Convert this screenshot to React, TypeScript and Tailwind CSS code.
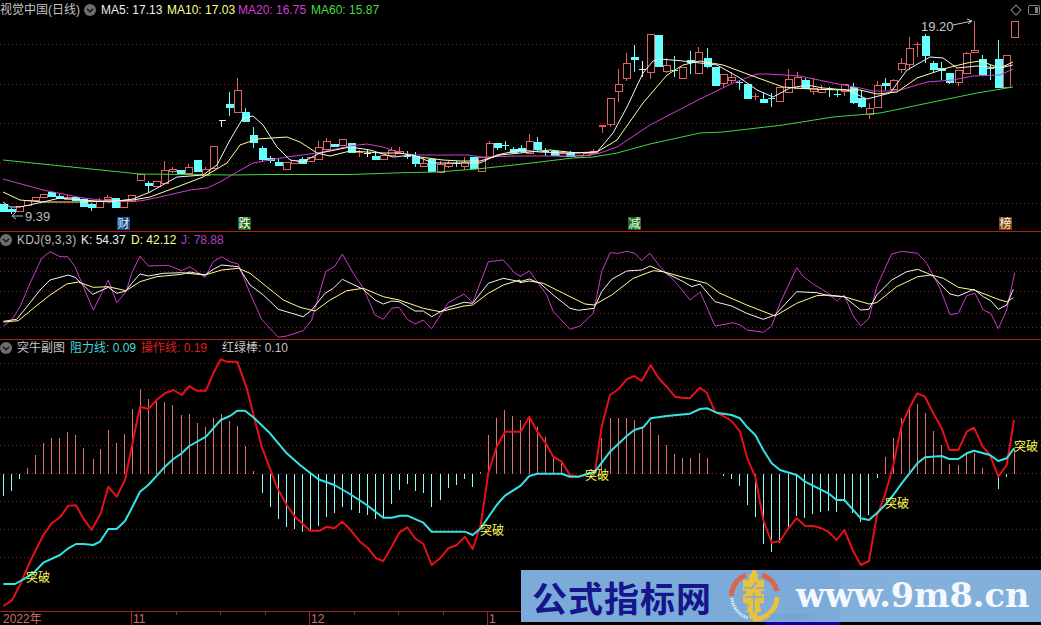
// 视觉中国 daily chart with the 突牛 sub-indicator. All series are in page pixels.
type Candle = [number, number, number, number, number, 'r' | 'c' | 'f' | 'w' | 'x'];

const candles: Candle[] = [
  [3, 204, 204, 211, 211, 'c'], [11, 208, 209, 211, 214, 'c'], [19, 206, 206, 211, 212, 'r'], [27, 200, 200, 205, 205, 'r'],
  [35, 197, 197, 200, 200, 'r'], [43, 194, 194, 197, 197, 'r'], [51, 192, 192, 196, 196, 'c'], [59, 194, 196, 198, 199, 'c'],
  [67, 195, 197, 199, 200, 'r'], [75, 197, 197, 200, 200, 'c'], [83, 198, 199, 206, 206, 'c'], [91, 203, 204, 207, 211, 'c'],
  [99, 198, 201, 207, 207, 'r'], [107, 195, 197, 199, 199, 'r'], [115, 198, 198, 207, 207, 'c'], [123, 201, 201, 207, 207, 'r'],
  [131, 195, 195, 201, 201, 'r'], [140, 174, 174, 180, 180, 'r'], [148, 181, 183, 185, 192, 'c'], [156, 181, 181, 186, 186, 'r'],
  [164, 161, 170, 183, 183, 'r'], [172, 167, 169, 171, 173, 'r'], [180, 170, 170, 173, 174, 'c'], [188, 164, 167, 173, 173, 'r'],
  [197, 160, 160, 171, 171, 'c'], [205, 167, 169, 175, 175, 'r'], [213, 146, 146, 168, 168, 'r'], [229, 92, 104, 107, 116, 'c'],
  [237, 78, 90, 112, 112, 'r'], [245, 108, 112, 121, 121, 'c'], [253, 127, 135, 142, 148, 'c'], [262, 146, 148, 159, 162, 'c'],
  [270, 156, 158, 160, 163, 'c'], [278, 159, 162, 165, 165, 'c'], [286, 162, 162, 169, 169, 'r'], [294, 160, 160, 163, 163, 'r'],
  [302, 157, 159, 163, 163, 'c'], [310, 157, 157, 161, 161, 'r'], [318, 141, 147, 159, 159, 'r'], [326, 138, 141, 149, 149, 'r'],
  [334, 144, 144, 146, 146, 'c'], [342, 139, 139, 145, 145, 'r'], [351, 143, 143, 152, 152, 'c'], [359, 150, 152, 153, 157, 'f'],
  [367, 149, 153, 153, 157, 'w'], [375, 152, 156, 159, 160, 'c'], [383, 155, 155, 159, 159, 'r'], [391, 147, 150, 155, 155, 'r'],
  [399, 147, 151, 153, 154, 'r'], [407, 151, 156, 156, 159, 'x'], [415, 152, 156, 163, 167, 'c'], [423, 157, 163, 166, 167, 'r'],
  [431, 159, 159, 171, 171, 'c'], [440, 161, 164, 172, 172, 'r'], [448, 161, 163, 166, 168, 'r'], [456, 161, 163, 163, 167, 'x'],
  [464, 157, 162, 166, 170, 'r'], [473, 157, 157, 168, 168, 'c'], [481, 157, 157, 171, 171, 'r'], [489, 141, 143, 157, 157, 'r'],
  [497, 143, 143, 147, 150, 'c'], [505, 141, 145, 145, 150, 'x'], [513, 147, 149, 152, 154, 'c'], [521, 145, 148, 151, 153, 'c'],
  [529, 134, 141, 153, 153, 'r'], [537, 137, 142, 149, 152, 'c'], [545, 148, 151, 151, 156, 'x'], [554, 151, 151, 155, 155, 'c'],
  [562, 151, 153, 156, 156, 'r'], [570, 151, 153, 156, 157, 'c'], [578, 155, 155, 157, 157, 'r'], [586, 153, 153, 155, 155, 'r'],
  [593, 149, 151, 153, 153, 'r'], [602, 125, 125, 127, 133, 'f'], [610, 98, 98, 124, 127, 'r'], [618, 69, 84, 91, 102, 'r'],
  [626, 53, 63, 78, 81, 'r'], [634, 45, 57, 59, 72, 'c'], [642, 61, 69, 69, 77, 'w'], [650, 34, 34, 72, 79, 'r'],
  [658, 35, 35, 66, 66, 'c'], [666, 58, 65, 71, 73, 'r'], [674, 56, 70, 70, 77, 'x'], [682, 67, 67, 78, 79, 'r'],
  [690, 51, 60, 62, 74, 'c'], [698, 47, 52, 73, 73, 'r'], [707, 48, 58, 66, 68, 'c'], [715, 67, 67, 85, 85, 'c'],
  [723, 74, 74, 83, 87, 'r'], [731, 72, 77, 80, 83, 'r'], [739, 80, 82, 82, 90, 'x'], [747, 84, 84, 98, 99, 'c'],
  [755, 93, 96, 97, 100, 'f'], [763, 93, 99, 102, 103, 'c'], [771, 93, 98, 98, 107, 'x'], [779, 87, 87, 101, 101, 'r'],
  [788, 69, 79, 92, 92, 'r'], [797, 72, 77, 88, 88, 'r'], [805, 78, 80, 88, 89, 'c'], [813, 78, 88, 91, 95, 'r'],
  [821, 85, 89, 92, 93, 'r'], [829, 87, 89, 89, 97, 'x'], [837, 90, 94, 94, 97, 'x'], [844, 84, 84, 91, 96, 'r'],
  [853, 83, 87, 102, 104, 'c'], [861, 90, 98, 106, 108, 'c'], [869, 103, 108, 114, 119, 'r'], [877, 81, 85, 107, 107, 'r'],
  [885, 78, 83, 85, 90, 'c'], [893, 79, 80, 89, 89, 'r'], [901, 58, 63, 69, 73, 'r'], [909, 37, 48, 64, 70, 'r'],
  [917, 42, 44, 45, 57, 'f'], [925, 34, 36, 55, 63, 'c'], [933, 61, 63, 69, 73, 'c'], [941, 62, 68, 70, 80, 'c'],
  [949, 73, 73, 82, 84, 'c'], [958, 70, 70, 82, 86, 'r'], [966, 52, 53, 73, 73, 'r'], [974, 21, 50, 52, 52, 'r'],
  [982, 55, 59, 74, 76, 'c'], [990, 65, 68, 68, 80, 'x'], [998, 40, 59, 87, 87, 'c'], [1006, 55, 55, 87, 88, 'r'],
  [1014, 21, 21, 37, 37, 'r'],
];

const ma60 = '3,160 140,174 233,175 267,174.5 350,174.5 403,172.7 437,172 477,169 523,164 573,158 593,157 617,153 650,144 700,133 723,132 783,125 833,117 880,113 933,102 977,93 1013,87';
const ma20 = '3,179 43,190 83,198 110,201 140,201 160,197 190,190 207,188 220,182 237,172 253,163 287,157 317,153 350,146 367,144 383,147 400,153 417,155 467,155 483,157 517,156 583,156 600,153 617,147 650,125 700,99 733,83 757,74 767,74 800,76 833,83 860,88 873,91 897,91 927,82 953,80 973,76 1000,75 1013,69';
const ma10 = '3,192 20,200 43,202 83,202 133,200 150,197 177,187 203,177 227,163 240,145 257,139 287,137 300,142 317,153 330,156 350,151 383,153 400,153 420,157 443,160 460,161 480,161 500,155 550,150 577,153 597,152 617,140 643,103 667,75 683,65 700,61 723,65 750,75 783,87 810,89 843,90 860,90 877,94 897,92 917,78 947,68 967,63 980,61 1000,68 1013,62';
const ma5 = '3,202 10,207 20,207 43,202 60,198 83,200 110,202 133,199 150,192 177,177 203,175 217,165 230,140 243,118 253,116 263,125 277,147 290,160 303,162 320,153 350,147 370,150 393,157 413,155 433,163 460,163 480,163 497,155 520,150 540,152 567,153 597,152 613,133 627,107 643,73 653,61 660,59 683,61 700,63 717,65 740,78 757,90 773,97 790,88 807,85 823,88 847,90 867,99 890,93 907,70 930,57 943,58 957,68 977,66 1000,68 1013,65';

// series below were read off 3x crops, z() brings them back to page pixels
const z = (x0: number, y0: number, v: number[]): string => {
  const out: string[] = [];
  for (let i = 0; i < v.length; i += 2) out.push(`${(x0 + v[i] / 3).toFixed(1)},${(y0 + v[i + 1] / 3).toFixed(1)}`);
  return out.join(' ');
};

const kdjJ = `${z(0, 230, [10,288,35,270,60,230,90,160,125,85,150,65,180,80,203,80,225,110,250,170,280,240,305,190,325,150,350,218,378,185,395,130,420,78,445,108,505,106,545,122,570,110,615,142,640,95,665,80,690,95,715,102,750,190,785,268,835,322,860,318,910,302,935,270,977,125,1005,108,1027,72,1060,130,1090,175,1125,255,1150,268,1175,235,1197,232,1222,268,1245,282,1270,270,1295,296,1345,218,1392,192,1418,218,1465,95,1510,90,1545,130,1560,137])} ${z(520, 230, [0,140,28,122,55,160,80,195,100,245,150,298,180,288,220,250,245,125,270,68,295,70,320,64,345,70,365,92,390,70,420,110,470,160,510,210,540,186,560,230,585,288,640,278,660,285,682,300,730,307,755,288,780,220,830,113,850,140,880,162,925,190,950,213,972,195,1000,258,1022,288,1047,265,1070,170,1115,72,1145,64,1193,70,1220,100,1260,175,1290,254,1315,250,1340,197,1365,190,1390,240,1412,250,1435,296,1460,240,1484,128])}`;
const kdjK = `${z(0, 230, [10,274,50,268,85,225,120,180,150,150,180,142,205,135,225,142,250,165,278,193,325,172,350,190,378,183,395,160,420,132,445,138,490,130,545,128,615,135,640,118,665,105,715,110,750,165,790,195,835,238,910,260,935,240,975,190,1000,175,1027,148,1090,178,1125,210,1150,222,1175,213,1197,215,1245,243,1270,243,1295,260,1345,232,1392,217,1418,220,1465,160,1510,145,1560,155])} ${z(520, 230, [0,155,28,147,60,160,100,195,150,235,175,241,222,235,245,185,275,148,320,123,365,120,390,108,430,125,490,155,515,170,540,162,585,215,635,228,680,250,730,268,765,255,830,185,890,188,925,197,972,200,1022,240,1047,238,1070,195,1115,150,1160,125,1193,118,1235,135,1290,192,1315,198,1362,178,1390,200,1412,212,1435,238,1460,225,1480,178])}`;
const kdjD = `${z(0, 230, [10,276,55,272,100,235,150,195,200,162,235,156,280,172,325,170,378,182,420,155,470,140,545,133,570,126,615,135,665,120,715,115,750,130,800,170,850,210,900,232,945,243,990,210,1040,182,1090,175,1150,200,1197,210,1270,235,1320,245,1392,228,1418,225,1465,190,1510,165,1560,150])} ${z(520, 230, [0,158,28,153,70,160,130,190,195,222,222,225,275,195,340,145,400,122,430,125,500,145,560,160,600,190,680,225,765,258,830,220,890,197,925,195,972,200,1047,222,1070,218,1130,170,1193,140,1235,135,1270,145,1315,172,1362,180,1440,210,1460,215,1480,203])}`;

const opLine = `${z(0, 340, [10,798,35,782,60,735,90,665,130,585,155,550,180,532,205,497,228,496,250,535,275,570,302,520,325,440,350,470,375,420,395,320,420,200,445,207,470,180,495,160,520,150,545,165,568,138,590,152,618,152,640,100,662,58,680,65,712,65,740,145,785,320,830,440,860,495,885,530,930,572,960,572,980,560,1003,565,1027,545,1050,568])} ${z(350, 340, [30,605,55,625,78,655,100,663,125,620,148,578,172,562,195,595,220,612,245,675,270,655,295,625,320,615,345,590,368,627,392,555,415,400,440,320,465,275,512,275,538,230,562,275,587,310,610,350,635,365,660,405,685,410,735,395,755,260,780,165,805,148,830,118,853,108,875,123,902,75,925,113,950,140,975,170,1000,174,1020,174,1050,143])} ${z(700, 340, [20,158,45,215,70,228,95,243,120,275,142,355,166,410,190,540,215,608,240,603,265,565,290,535,315,557,340,558,365,565,385,575,410,600,433,570,458,630,482,675,507,663,530,530,555,465,580,375,605,255,630,200,652,160,675,170,700,220,725,265,748,330,775,330,800,275,822,263,848,320,870,345,895,410,920,375,942,240])}`;
const resistLine = `${z(0, 340, [10,732,45,732,70,718,100,700,130,668,180,645,205,625,228,612,250,612,280,615,300,605,325,567,350,567,375,543,395,505,420,455,445,435,495,380,520,357,545,340,568,318,618,290,662,240,690,228,712,212,735,212,760,232,810,280,860,340,900,375,955,418,1003,435,1050,462])} ${z(350, 340, [50,495,100,533,125,533,150,527,172,527,220,548,245,575,345,575,368,585,392,565,440,495,465,467,512,437,538,408,562,401,635,401,660,410,685,410,735,395,780,335,830,288,853,270,880,262,902,235,950,228,1020,221,1050,207])} ${z(700, 340, [22,205,50,218,95,225,120,235,142,262,166,285,190,330,215,370,240,390,290,405,315,425,385,460,410,480,433,480,482,535,507,540,530,520,555,495,580,465,605,430,652,370,675,352,725,348,748,357,775,357,800,340,822,332,870,345,895,363,920,355,942,325])}`;

// histogram sticks as crop x, end y pairs; above the zero line (crop y 400) is red
const bars: [number, number[]][] = [
  [0, [10,467,34,452,58,416,82,384,106,345,130,310,154,294,178,294,202,277,226,285,250,324,278,357,301,327,325,270,349,310,373,282,397,207,421,147,445,177,469,180,493,186,517,195,544,225,568,222,592,250,616,262,640,233,664,222,688,243,712,258,736,318,760,393,787,458,811,500,835,537,859,560,883,567,907,575,931,570,955,557,979,530,1003,520,1027,500]],
  [350, [4,510,28,520,52,525,76,537,100,530,124,492,148,450,172,432,196,453,220,458,244,500,271,480,295,445,319,436,343,417,367,440,391,397,415,285,439,235,463,210,487,228,511,240,538,232,562,260,586,290,610,348,634,362,754,295,781,233,805,233,829,233,853,240,877,262,901,245,925,285,949,315,973,342,997,353,1021,353,1048,340]],
  [700, [22,355,70,408,94,416,118,437,142,495,166,530,190,613,214,637,238,610,265,565,289,527,313,533,337,522,361,515,385,512,409,515,433,487,457,518,481,545,505,525,532,413,556,350,580,293,604,233,628,205,652,192,676,220,700,272,724,315,748,372,775,375,799,342,823,340,847,384,895,446,919,410,943,325]],
];

const mainGrid = [44.5, 84.5, 123.5, 163.5, 203.5];
const kdjGrid = [258.5, 271.5, 291.5, 313.5, 327.5];
const subGrid = [363.5, 389.5, 417.5, 445.5, 473.5, 501.5, 529.5, 557.5];
const breakouts: [number, number][] = [[26, 582], [480, 535], [585, 480], [885, 508], [1014, 451]];
const badges: [number, string, string, string][] = [
  [117, '财', '#1a4a82', '#d8ecff'],
  [238, '跌', '#1c6a1c', '#ffffff'],
  [628, '减', '#1c6a1c', '#e8ffe8'],
  [999, '榜', '#7a4a14', '#fff4e0'],
];
const minorTicks = [176, 220, 265, 354, 398, 443, 620, 804];
const majorTicks: [number, string][] = [[131, '11'], [309, '12'], [487, '1']];

function Grid({ ys }: { ys: number[] }) {
  return (
    <>
      {ys.map((y) => (
        <line key={y} x1={0} x2={1041} y1={y} y2={y} stroke="#8c1c1c" strokeDasharray="1 3" />
      ))}
    </>
  );
}

function CandleMark({ c }: { c: Candle }) {
  const [x, wt, bt, bb, wb, kind] = c;
  const px = x + 0.5;
  const color = kind === 'r' || kind === 'f' ? '#df6463' : kind === 'w' ? '#f4f4f4' : '#66ffff';
  if (kind === 'w' || kind === 'x' || kind === 'f') {
    return (
      <g stroke={kind === 'f' ? '#ef5555' : color}>
        <line x1={px} x2={px} y1={wt} y2={wb} />
        <rect x={x - 3} y={bt} width={7} height={Math.max(bb - bt, 1)} fill={kind === 'f' ? '#ef5555' : color} strokeWidth={0} />
      </g>
    );
  }
  return (
    <g stroke={color}>
      {wt < bt && <line x1={px} x2={px} y1={wt} y2={bt} />}
      {wb > bb && <line x1={px} x2={px} y1={bb} y2={wb} />}
      <rect x={x - 2.5} y={bt + 0.5} width={7} height={bb - bt} fill={kind === 'c' ? color : '#000'} />
    </g>
  );
}

function Chevron() {
  return (
    <svg viewBox="0 0 12 12" className="w-3 h-3 shrink-0">
      <circle cx="6" cy="6" r="6" fill="#6e6e6e" />
      <path d="M3 4.8 6 7.8 9 4.8" fill="none" stroke="#1c1c1c" strokeWidth="1.6" />
    </svg>
  );
}

function Quote({ label, value, color, className }: { label: string; value: string; color: string; className?: string }) {
  return (
    <span className={`whitespace-nowrap ${className ?? ''}`} style={{ color }}>
      {label} {value}
    </span>
  );
}

function Logo() {
  return (
    <svg viewBox="0 0 60 57" className="w-[60px] h-[57px] shrink-0">
      <path d="M7.5 29A22.5 22.5 0 0 1 22 8" fill="none" stroke="#d8674f" strokeWidth="5" />
      <path d="M38 8A22.5 22.5 0 0 1 53 24" fill="none" stroke="#d8674f" strokeWidth="5" />
      <path d="M53 30A22.5 22.5 0 0 1 29 52" fill="none" stroke="#e8c23c" strokeWidth="5" />
      <path d="M8 31A22.5 22.5 0 0 0 24 51" fill="none" stroke="#e4eef8" strokeWidth="3" strokeDasharray="1.5 1" />
      <path d="M28 3h4.5v3L34 8v5h6v11h-3v3h3v9h-3v9h-3.500v7h-8v-7H22v-9h-3v-9h3v-3h-3V13h6V8l3-2z" fill="#e8c23c" />
      <path d="M20 21h8l4-6M32 21h8M21 30h18M30 26v20M24 37l-2 7M36 37l2 7" fill="none" stroke="#7caad8" strokeWidth="1.600" />
    </svg>
  );
}

export default function App() {
  return (
    <div className="relative w-[1041px] h-[625px] overflow-hidden bg-black flex flex-col text-[12px] leading-none font-['Liberation_Sans','Noto_Sans_CJK_SC',sans-serif]">
      {/* price pane */}
      <div className="relative h-[231px] shrink-0 border-b border-[#b01c1c] box-content">
        <svg viewBox="0 0 1041 231" className="absolute inset-0 w-[1041px] h-[231px]">
          <Grid ys={mainGrid} />
          <g shapeRendering="crispEdges">
            {candles.map((c) => (
              <CandleMark key={c[0]} c={c} />
            ))}
            {/* the lone T shaped doji */}
            <path d="M218.500 120.500h7M221.500 120.500v6" stroke="#f0f0f0" fill="none" />
          </g>
          <polyline points={ma60} fill="none" stroke="#3fd83f" />
          <polyline points={ma20} fill="none" stroke="#d13fd1" />
          <polyline points={ma10} fill="none" stroke="#ffffa0" />
          <polyline points={ma5} fill="none" stroke="#f4f4f4" />
          <text x={25} y={221} fontSize={13} fill="#b8b8b8">9.39</text>
          <path d="M23 216H12M16 212l-4 4 4 3" fill="none" stroke="#b8b8b8" />
          <text x={921} y={31} fontSize={13} fill="#c8c8c8">19.20</text>
          <path d="M953 25 972 21M967 19l5 2-4 3" fill="none" stroke="#c8c8c8" />
          {badges.map(([x, t, bg, fg]) => (
            <g key={t}>
              <rect x={x} y={217} width={13} height={13} fill={bg} />
              <text x={x + 0.5} y={228} fontSize={12} fill={fg}>{t}</text>
            </g>
          ))}
        </svg>
        <div className="relative flex items-center h-[19px]">
          <span className="text-[#c4c4c4] whitespace-nowrap w-[84px]">视觉中国(日线)</span>
          <Chevron />
          <Quote className="ml-[5px] w-[66px]" label="MA5:" value="17.13" color="#f0f0f0" />
          <Quote className="w-[71px]" label="MA10:" value="17.03" color="#ffff90" />
          <Quote className="w-[73px]" label="MA20:" value="16.75" color="#d43cd4" />
          <Quote label="MA60:" value="15.87" color="#44dc44" />
          <div className="ml-auto mr-[1px] flex items-center gap-[8px]">
            <span className="block w-[8px] h-[8px] rotate-45 border border-[#808080]" />
            <span className="flex justify-end w-[12px] h-[10px] p-[1px] border border-[#808080] rounded-[2px]">
              <span className="block w-[3px] bg-[#808080]" />
            </span>
          </div>
        </div>
      </div>

      {/* KDJ pane */}
      <div className="relative h-[107px] shrink-0 border-b border-[#b01c1c] box-content">
        <svg viewBox="0 232 1041 107" className="absolute inset-0 w-[1041px] h-[107px]">
          <Grid ys={kdjGrid} />
          <polyline points={kdjJ} fill="none" stroke="#c83cc8" />
          <polyline points={kdjD} fill="none" stroke="#ffff90" />
          <polyline points={kdjK} fill="none" stroke="#f4f4f4" />
        </svg>
        <div className="relative flex items-center h-[16px]">
          <Chevron />
          <span className="ml-[5px] w-[64px] text-[#bdbdbd] tracking-[0.2px]">KDJ(9,3,3)</span>
          <Quote className="w-[50px]" label="K:" value="54.37" color="#eeeeee" />
          <Quote className="w-[50px]" label="D:" value="42.12" color="#ffff90" />
          <Quote label="J:" value="78.88" color="#b040c0" />
        </div>
      </div>

      {/* 突牛 pane */}
      <div className="relative h-[271px] shrink-0 border-b border-[#b01c1c] box-content">
        <svg viewBox="0 340 1041 271" className="absolute inset-0 w-[1041px] h-[271px]">
          <Grid ys={subGrid} />
          <g shapeRendering="crispEdges">
            {bars.flatMap(([x0, v]) =>
              v.flatMap((n, i) => {
                if (i % 2) return [];
                const x = Math.round(x0 + n / 3) + 0.5;
                const y = 340 + v[i + 1] / 3;
                return [<line key={`${x0}-${n}`} x1={x} x2={x} y1={473.5} y2={y} stroke={v[i + 1] < 400 ? '#e07272' : '#86ffff'} />];
              }),
            )}
          </g>
          <polyline points={opLine} fill="none" stroke="#e4101a" strokeWidth={2} strokeLinejoin="round" />
          <polyline points={resistLine} fill="none" stroke="#34e4e4" strokeWidth={2} strokeLinejoin="round" />
          {breakouts.map(([x, y]) => (
            <text key={x} x={x} y={y} fontSize={12} fill="#ffff55">突破</text>
          ))}
        </svg>
        <div className="relative flex items-center h-[16px]">
          <Chevron />
          <span className="ml-[5px] w-[53px] text-[#c4c4c4]">突牛副图</span>
          <Quote className="w-[71px]" label="阻力线:" value="0.09" color="#4cd6d6" />
          <Quote className="w-[81px]" label="操作线:" value="0.19" color="#e01c1c" />
          <Quote label="红绿棒:" value="0.10" color="#c4c4c4" />
        </div>
      </div>

      {/* date axis */}
      <div className="relative flex-1">
        <svg viewBox="0 612 1041 13" className="absolute inset-0 w-[1041px] h-[13px]">
          {majorTicks.map(([x]) => (
            <line key={x} x1={x + 0.5} x2={x + 0.5} y1={612} y2={625} stroke="#a02424" />
          ))}
          {minorTicks.map((x) => (
            <line key={x} x1={x + 0.5} x2={x + 0.5} y1={612} y2={615} stroke="#a02424" />
          ))}
          <text x={3} y={623} fontSize={12} fill="#c87070">2022年</text>
          {majorTicks.map(([x, t]) => (
            <text key={t} x={x + 2} y={623} fontSize={12} fill="#c87070">{t}</text>
          ))}
          <rect x={766} y={621} width={74} height={4} fill="#10009c" />
        </svg>
      </div>

      {/* site watermark over the chart */}
      <div className="absolute left-[521px] top-[570px] w-[520px] h-[52px] bg-[#7cabd9] flex items-center overflow-hidden">
        <span className="ml-[11px] w-[180px] shrink-0 whitespace-nowrap text-[35px] font-bold tracking-[1px] text-[#15158c] font-['Noto_Sans_CJK_SC',sans-serif]">公式指标网</span>
        <span className="ml-[12px] -mt-[1px]"><Logo /></span>
        <span className="ml-[12px] whitespace-nowrap text-[33.5px] font-bold text-[#f4f8fc] font-['DejaVu_Serif',serif]">www.9m8.cn</span>
        <span className="absolute left-[319px] top-0 bottom-0 right-0 bg-white/5" />
        <span className="absolute left-[247px] top-[42.500px] text-[9px] text-[#6f9bc9]">2023/03/27</span>
      </div>
    </div>
  );
}
